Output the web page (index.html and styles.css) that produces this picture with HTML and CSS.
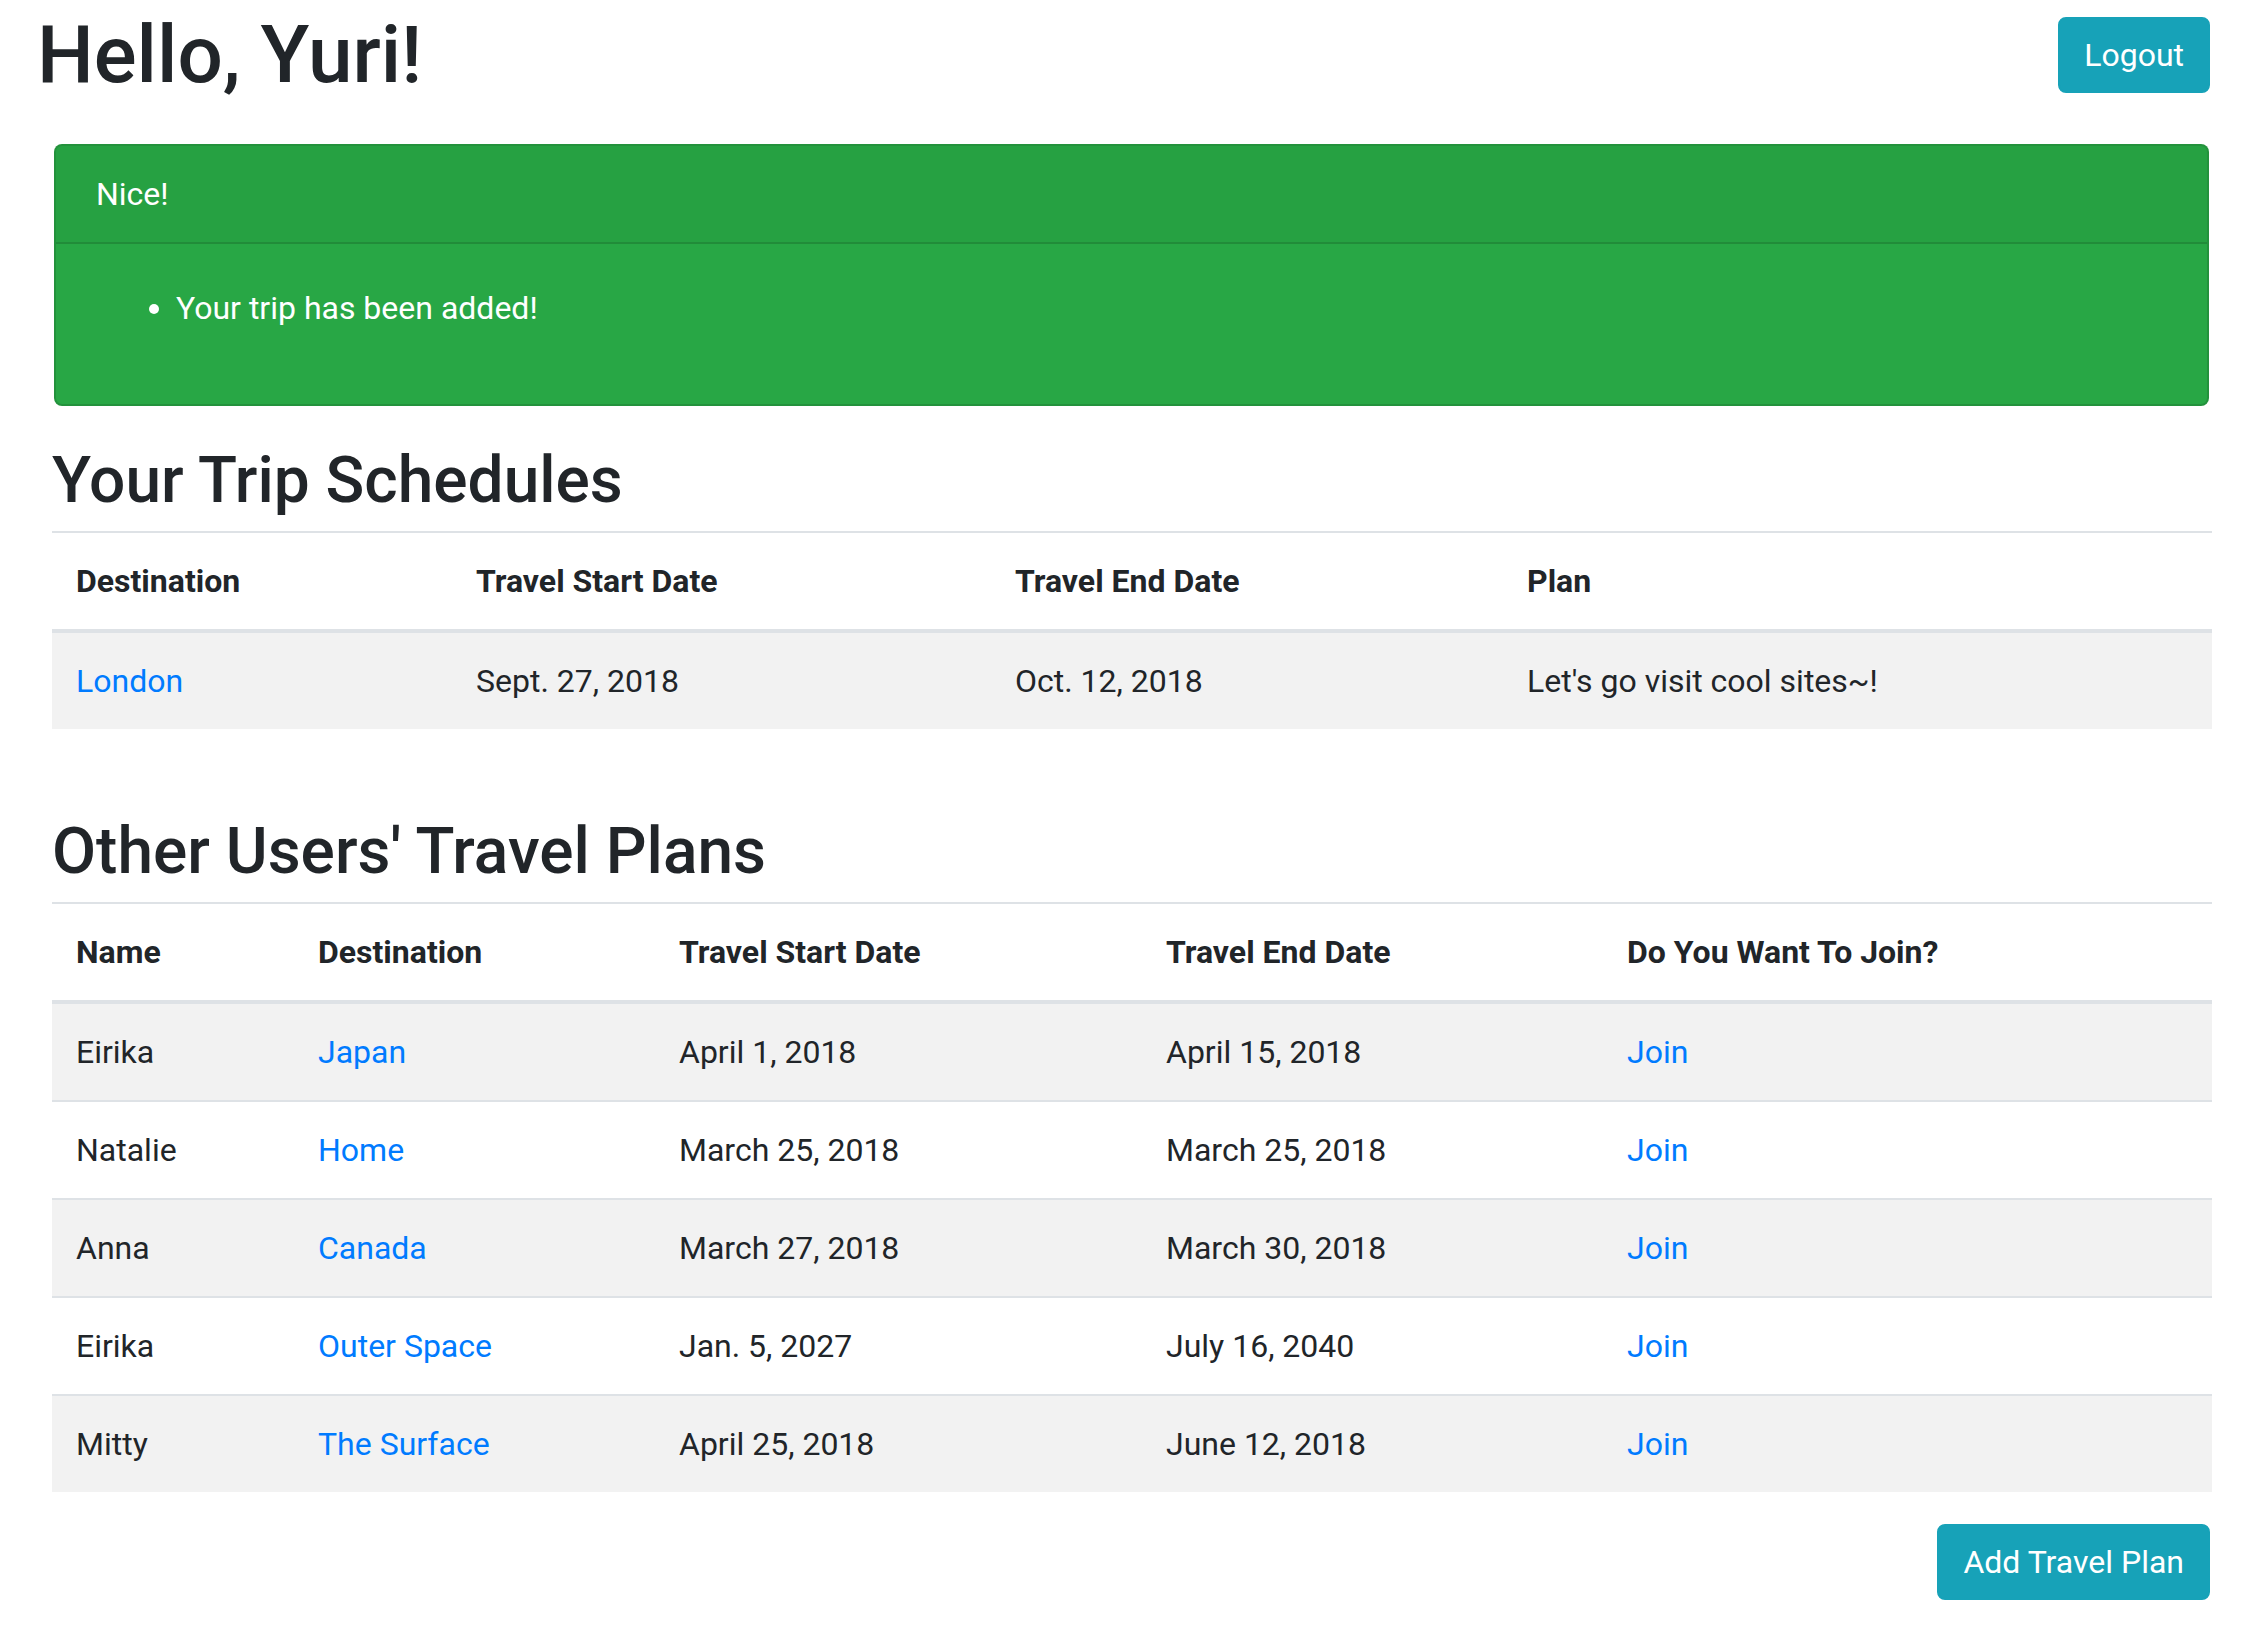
FILE: index.html
```html
<!DOCTYPE html>
<html lang="en">
<head>
<meta charset="utf-8">
<title>Travel Dashboard</title>
<link rel="stylesheet" href="styles.css">
</head>
<body>
<header class="topbar">
  <h1 class="greeting">Hello, Yuri!</h1>
  <a class="btn btn-info" href="#">Logout</a>
</header>
<main class="content">
  <div class="card">
    <div class="card-header">Nice!</div>
    <div class="card-body">
      <ul class="messages">
        <li>Your trip has been added!</li>
      </ul>
    </div>
  </div>

  <section class="section">
    <h2 class="section-title">Your Trip Schedules</h2>
    <table class="table">
      <colgroup>
        <col class="c-dest"><col class="c-start"><col class="c-end"><col>
      </colgroup>
      <thead>
        <tr><th>Destination</th><th>Travel Start Date</th><th>Travel End Date</th><th>Plan</th></tr>
      </thead>
      <tbody>
        <tr><td><a href="#">London</a></td><td>Sept. 27, 2018</td><td>Oct. 12, 2018</td><td>Let's go visit cool sites~!</td></tr>
      </tbody>
    </table>
  </section>

  <section class="section section-other">
    <h2 class="section-title">Other Users' Travel Plans</h2>
    <table class="table">
      <colgroup>
        <col class="o-name"><col class="o-dest"><col class="o-start"><col class="o-end"><col>
      </colgroup>
      <thead>
        <tr><th>Name</th><th>Destination</th><th>Travel Start Date</th><th>Travel End Date</th><th>Do You Want To Join?</th></tr>
      </thead>
      <tbody>
        <tr><td>Eirika</td><td><a href="#">Japan</a></td><td>April 1, 2018</td><td>April 15, 2018</td><td><a href="#">Join</a></td></tr>
        <tr><td>Natalie</td><td><a href="#">Home</a></td><td>March 25, 2018</td><td>March 25, 2018</td><td><a href="#">Join</a></td></tr>
        <tr><td>Anna</td><td><a href="#">Canada</a></td><td>March 27, 2018</td><td>March 30, 2018</td><td><a href="#">Join</a></td></tr>
        <tr><td>Eirika</td><td><a href="#">Outer Space</a></td><td>Jan. 5, 2027</td><td>July 16, 2040</td><td><a href="#">Join</a></td></tr>
        <tr><td>Mitty</td><td><a href="#">The Surface</a></td><td>April 25, 2018</td><td>June 12, 2018</td><td><a href="#">Join</a></td></tr>
      </tbody>
    </table>
  </section>

  <div class="actions">
    <a class="btn btn-info" href="#">Add Travel Plan</a>
  </div>
</main>
</body>
</html>
```
FILE: styles.css
```css
html, body {
  margin: 0;
  padding: 0;
  background: #fff;
}
body {
  font-family: Roboto, "Liberation Sans", Arial, sans-serif;
  font-size: 32px;
  line-height: 48px;
  color: #212529;
}
a {
  color: #007bff;
  text-decoration: none;
}

.topbar {
  display: flex;
  justify-content: space-between;
  align-items: flex-start;
  padding: 0 39px 0 37px;
}
.greeting {
  margin: 0;
  padding-top: 7px;
  font-size: 80px;
  font-weight: 500;
  line-height: 96px;
}

.btn {
  display: inline-block;
  padding: 12px 24px;
  font-size: 32px;
  line-height: 48px;
  border: 2px solid #17a2b8;
  border-radius: 8px;
  background: #17a2b8;
  color: #fff;
}
.topbar .btn {
  margin-top: 17px;
}

.content {
  padding: 0 37px 40px 52px;
}

.card {
  margin: 41px 3px 32px 2px;
  background: #28a745;
  color: #fff;
  border: 2px solid rgba(0, 0, 0, 0.125);
  border-radius: 8px;
  overflow: hidden;
}
.card-header {
  padding: 24px 40px;
  background: rgba(0, 0, 0, 0.03);
  border-bottom: 2px solid rgba(0, 0, 0, 0.125);
}
.card-body {
  padding: 40px;
}
.messages {
  margin: 0 0 32px;
  padding-left: 80px;
}

.section-title {
  margin: 0 0 12px;
  padding-top: 4px;
  font-size: 64px;
  font-weight: 500;
  line-height: 77px;
}
.section-other {
  margin-top: 80px;
}

.table {
  width: 100%;
  border-collapse: collapse;
  table-layout: fixed;
  margin-bottom: 32px;
}
.table th,
.table td {
  padding: 24px;
  text-align: left;
  vertical-align: top;
  border-top: 2px solid #dee2e6;
  white-space: nowrap;
}
.table thead th {
  font-weight: 700;
  vertical-align: bottom;
  border-bottom: 4px solid #dee2e6;
}
.table tbody tr:nth-child(odd) {
  background: rgba(0, 0, 0, 0.05);
}

.c-dest { width: 400px; }
.c-start { width: 539px; }
.c-end { width: 512px; }

.o-name { width: 242px; }
.o-dest { width: 361px; }
.o-start { width: 487px; }
.o-end { width: 461px; }

.actions {
  display: flex;
  justify-content: flex-end;
  padding-right: 2px;
}
```
